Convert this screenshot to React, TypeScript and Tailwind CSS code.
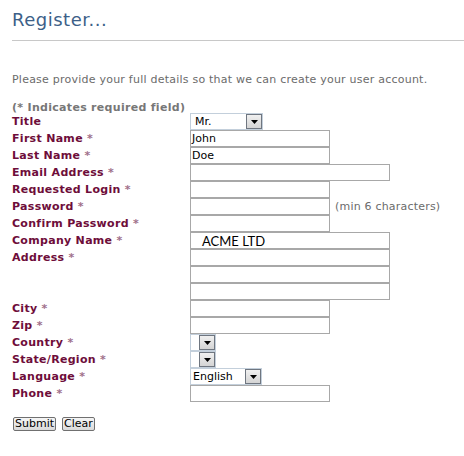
import React from "react";

const Req = () => <span className="text-[#a0708a]"> *</span>;

function Label({ children, req = true }: { children: React.ReactNode; req?: boolean }) {
  return (
    <div className="h-[17px] leading-[17px] text-[11px] font-bold tracking-[0.3px] text-[#6e0d3a] whitespace-nowrap">
      {children}
      {req && <Req />}
    </div>
  );
}

function Box({ w, value, children }: { w: number; value?: string; children?: React.ReactNode }) {
  return (
    <div
      className="h-[17px] border border-[#a8a8a8] bg-white pl-[1px] text-[11px] leading-[15px] text-black overflow-hidden whitespace-nowrap"
      style={{ width: w }}
    >
      {value}
      {children}
    </div>
  );
}

function Arrow() {
  return (
    <div className="w-[16px] h-[15px] border border-[#6f7680] bg-gradient-to-b from-[#f0f0f0] to-[#d4d4d4] flex items-center justify-center">
      <svg width="7" height="4" viewBox="0 0 7 4">
        <path d="M0 0 L7 0 L3.5 4 Z" fill="#000" />
      </svg>
    </div>
  );
}

function Select({ w, value, padLeft = 4 }: { w: number; value?: string; padLeft?: number }) {
  return (
    <div
      className="h-[17px] border border-[#c3cfdb] bg-white flex items-center justify-between text-[11px] text-black"
      style={{ width: w }}
    >
      <span style={{ paddingLeft: padLeft }} className="leading-[15px]">
        {value}
      </span>
      <Arrow />
    </div>
  );
}

export default function App() {
  return (
    <div className="w-[464px] h-[456px] bg-white font-['DejaVu_Sans',Verdana,sans-serif] overflow-hidden">
      <div className="pl-3 pt-[9px]">
        <h1 className="text-[18px] leading-[22px] tracking-[0.5px] text-[#3d5f88] font-normal">Register...</h1>
        <div className="mt-[9px] h-px bg-[#c8c8c8]" />
        <p className="mt-[32px] text-[11px] leading-[13px] tracking-[0.23px] text-[#6b6b6b] whitespace-nowrap">
          Please provide your full details so that we can create your user account.
        </p>
        <div className="mt-[15px] h-[12px] text-[11px] leading-[13px] font-bold tracking-[0.3px] text-[#777777] whitespace-nowrap">
          (* Indicates required field)
        </div>

        <div className="grid grid-cols-[178px_1fr]">
          <Label req={false}>Title</Label>
          <Select w={73} value="Mr." />

          <Label>First Name</Label>
          <Box w={140} value="John" />

          <Label>Last Name</Label>
          <Box w={140} value="Doe" />

          <Label>Email Address</Label>
          <Box w={200} />

          <Label>Requested Login</Label>
          <Box w={140} />

          <Label>Password</Label>
          <div className="flex items-center gap-[5px]">
            <Box w={140} />
            <span className="text-[11px] leading-[17px] tracking-[0.2px] text-[#6b6b6b]">(min 6 characters)</span>
          </div>

          <Label>Confirm Password</Label>
          <Box w={140} />

          <Label>Company Name</Label>
          <Box w={200}>
            <span className="font-['Lato',sans-serif] text-[13px] leading-[16px] pl-[10px]">ACME LTD</span>
          </Box>

          <Label>Address</Label>
          <div className="flex flex-col">
            <Box w={200} />
            <Box w={200} />
            <Box w={200} />
          </div>

          <Label>City</Label>
          <Box w={140} />

          <Label>Zip</Label>
          <Box w={140} />

          <Label>Country</Label>
          <Select w={26} />

          <Label>State/Region</Label>
          <Select w={26} />

          <Label>Language</Label>
          <Select w={72} value="English" padLeft={2} />

          <Label>Phone</Label>
          <Box w={140} />
        </div>

        <div className="mt-[15px] flex gap-[6px] pl-px">
          <button className="h-[14px] px-[1px] border border-[#707070] rounded-[2px] bg-gradient-to-b from-[#f6f6f6] to-[#dadada] text-[11px] leading-[12px] text-black">
            Submit
          </button>
          <button className="h-[14px] px-[1px] border border-[#707070] rounded-[2px] bg-gradient-to-b from-[#f6f6f6] to-[#dadada] text-[11px] leading-[12px] text-black">
            Clear
          </button>
        </div>
      </div>
    </div>
  );
}
